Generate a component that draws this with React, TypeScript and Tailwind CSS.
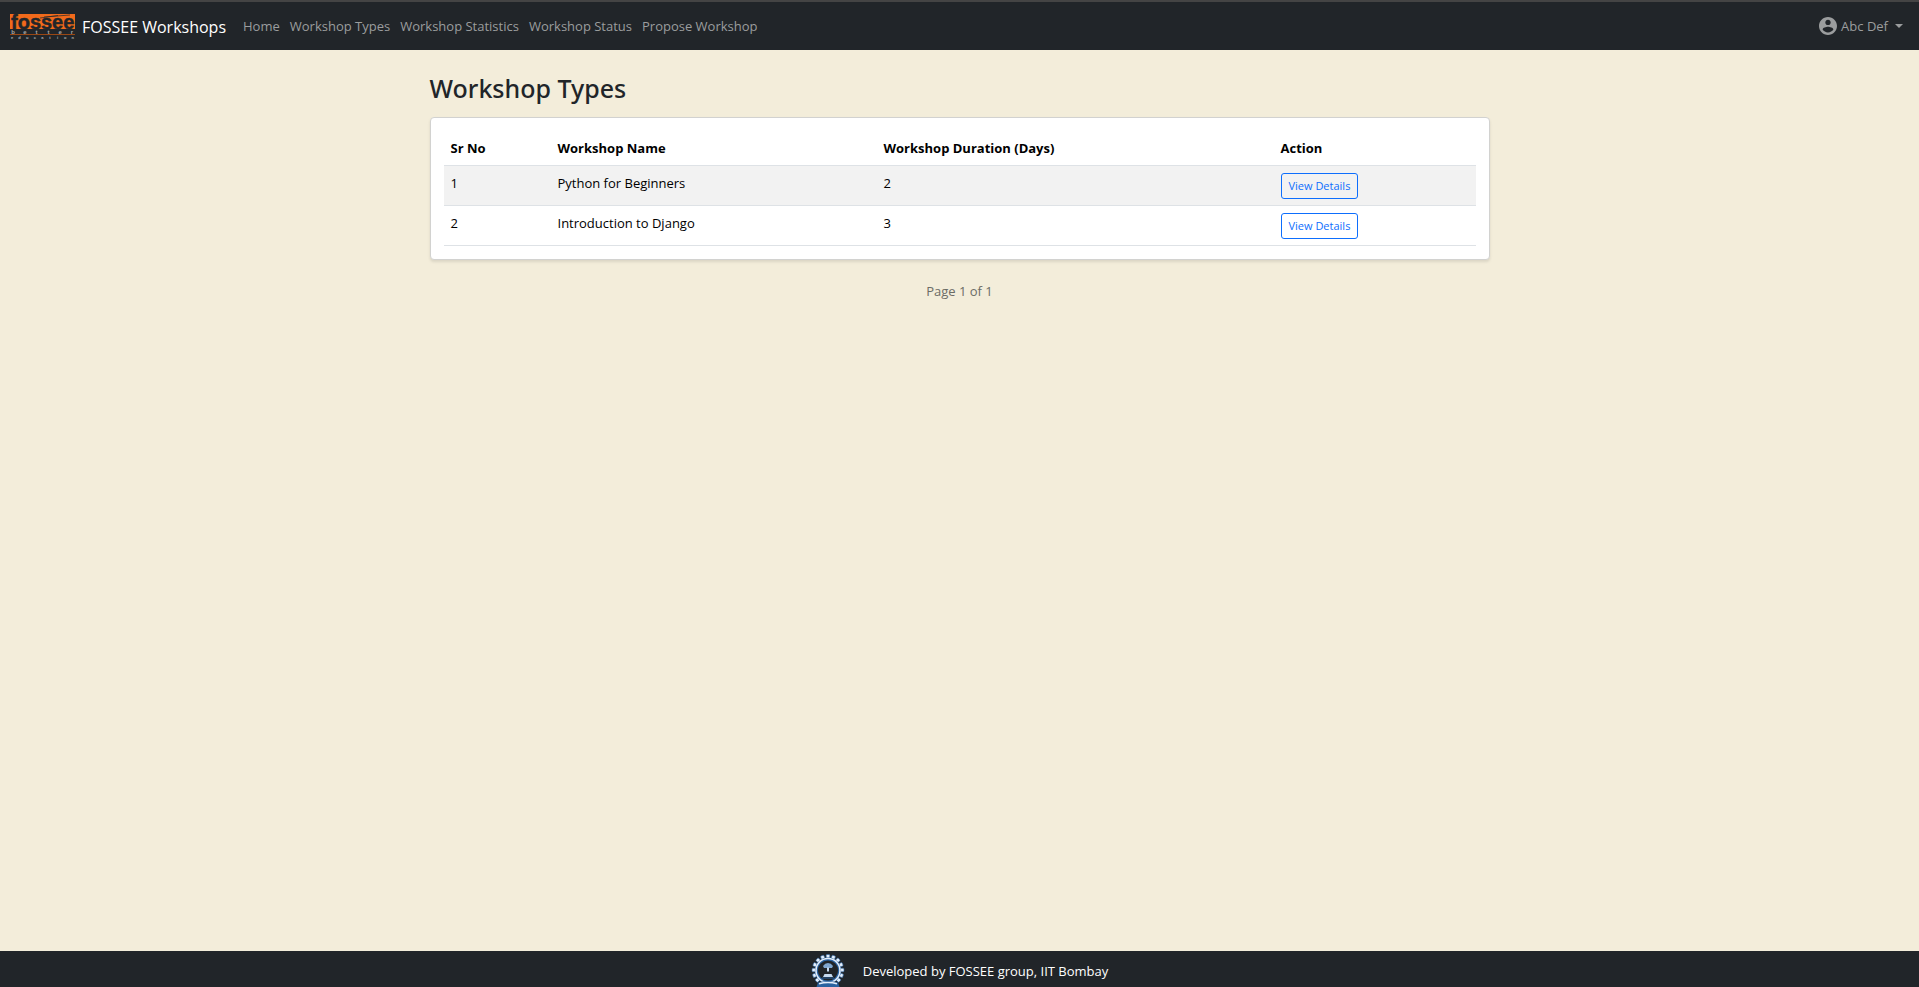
import React from "react";

const navLinks = ["Home", "Workshop Types", "Workshop Statistics", "Workshop Status", "Propose Workshop"];

const workshops = [
  { id: 1, name: "Python for Beginners", days: 2 },
  { id: 2, name: "Introduction to Django", days: 3 },
];

const better = ["b", "e", "t", "t", "e", "r"];
const education = ["e", "d", "u", "c", "a", "t", "i", "o", "n"];

function FosseeLogo() {
  return (
    <svg width="65" height="26" viewBox="0 0 65 26" role="img" aria-label="FOSSEE" className="shrink-0 overflow-visible">
      <rect width="65" height="15" fill="#f26a1b" />
      <text x="1" y="15" fontFamily="Liberation Sans" fontWeight="700" fontSize="20" fill="#212529" stroke="#212529" strokeWidth="0.5">fossee</text>
      <path d="M30 4 L48 1.5 M34 3 L60 1" stroke="#212529" strokeWidth="0.7" />
      <rect y="20.2" width="65" height="0.8" fill="#b8500f" />
      {better.map((c, i) => (
        <text key={i} x={3 + i * 11.8} y="19.6" textAnchor="middle" fontFamily="Liberation Sans" fontWeight="700" fontSize="6" fill="#a8a8a8">{c}</text>
      ))}
      {education.map((c, i) => (
        <text key={i} x={2 + i * 7.6} y="25" textAnchor="middle" fontFamily="Liberation Sans" fontWeight="700" fontSize="4" fill="#b0b0b0">{c}</text>
      ))}
    </svg>
  );
}

function InstituteEmblem() {
  const teeth = Array.from({ length: 13 }, (_, i) => -222 + i * 22);
  return (
    <svg width="34" height="33" viewBox="0 0 34 33" role="img" aria-label="IIT Bombay" className="shrink-0">
      {teeth.map((a) => (
        <rect key={a} x="-1.8" y="-1.8" width="3.6" height="3.6" rx="0.8" fill="#e4eefa" stroke="#2a62a0" strokeWidth="0.6"
          transform={`translate(17 16.5) rotate(${a}) translate(14.2 0)`} />
      ))}
      <circle cx="17" cy="16.5" r="11.6" fill="#212529" stroke="#2a62a0" strokeWidth="3" />
      <circle cx="17" cy="16.5" r="12" fill="none" stroke="#e4eefa" strokeWidth="1.6" />
      <path d="M12 12 q2 -3 5 -3 t5 3 l-1 2 h-8z" fill="#7fa6cf" />
      <path d="M16 13.5 h2 v4 h-2z M13 11 h2 M19 11 h2" fill="#c6daf0" />
      <path d="M12 23 l1.5 -3 h7 l1.5 3z" fill="#c6daf0" />
      <path d="M11 24 h12" stroke="#2a62a0" strokeWidth="1" />
      <path d="M7 28.5 q10 -3 20 0 l1.5 4.5 h-23z" fill="#2a62a0" />
      <path d="M8 29.8 q9 -2.4 18 0" stroke="#e4eefa" strokeWidth="1.5" fill="none" />
    </svg>
  );
}

export default function App() {
  return (
    <div className="flex min-h-screen flex-col bg-[#f3edda] font-['Open_Sans','Noto_Sans',sans-serif] text-[13px] leading-5 text-[#212529]">
      <nav className="flex h-[50px] items-center border-t-2 border-[#444444] bg-[#212529] px-[10px]">
        <a href="#" className="mr-3 flex items-center gap-[7px] pt-[2px] text-base text-white">
          <FosseeLogo />
          <span>FOSSEE Workshops</span>
        </a>
        <ul className="flex flex-1 text-[#9b9d9e]">
          {navLinks.map((label) => (
            <li key={label}>
              <a href="#" className="px-[5px]">{label}</a>
            </li>
          ))}
        </ul>
        <button type="button" className="flex items-center gap-1 px-[6px] text-[#9b9d9e]">
          <svg width="18" height="18" viewBox="2 2 20 20" fill="currentColor" aria-hidden="true">
            <path d="M12 2C6.48 2 2 6.48 2 12s4.48 10 10 10 10-4.48 10-10S17.52 2 12 2zm0 3c1.66 0 3 1.34 3 3s-1.34 3-3 3-3-1.34-3-3 1.34-3 3-3zm0 14.2c-2.5 0-4.71-1.28-6-3.22.03-1.99 4-3.08 6-3.08 1.99 0 5.97 1.09 6 3.08-1.29 1.94-3.5 3.22-6 3.22z" />
          </svg>
          <span>Abc Def</span>
          <span className="ml-[3px] border-x-4 border-t-4 border-x-transparent border-t-current" />
        </button>
      </nav>

      <main className="mx-auto w-full max-w-[1060px] flex-1 pt-[22px]">
        <h2 className="mb-[13px] font-['Noto_Sans',sans-serif] text-[25px] leading-8 font-medium">Workshop Types</h2>
        <div className="rounded border border-[#d2d2d0] bg-white px-[13px] py-[13px] shadow-[0_2px_3px_rgba(0,0,0,0.1)]">
          <table className="w-full table-fixed border-separate border-spacing-0 text-left text-black">
            <colgroup>
              <col className="w-[107px]" />
              <col className="w-[326px]" />
              <col className="w-[397px]" />
              <col />
            </colgroup>
            <thead>
              <tr>
                <th className="border-b border-[#dee2e6] px-[7px] py-[7px] font-bold">Sr No</th>
                <th className="border-b border-[#dee2e6] px-[7px] py-[7px] font-bold">Workshop Name</th>
                <th className="border-b border-[#dee2e6] px-[7px] py-[7px] font-bold">Workshop Duration (Days)</th>
                <th className="border-b border-[#dee2e6] px-[7px] py-[7px] font-bold">Action</th>
              </tr>
            </thead>
            <tbody>
              {workshops.map((w) => (
                <tr key={w.id} className="align-top odd:bg-[#f2f2f2]">
                  <td className="border-b border-[#dee2e6] px-[7px] pt-[7px]">{w.id}</td>
                  <td className="border-b border-[#dee2e6] px-[7px] pt-[7px]">{w.name}</td>
                  <td className="border-b border-[#dee2e6] px-[7px] pt-[7px]">{w.days}</td>
                  <td className="border-b border-[#dee2e6] px-[7px] pt-[7px] pb-[6px]">
                    <a href="#" className="flex h-[26px] w-fit items-center rounded-[3px] border border-[#0d6efd] px-[7px] text-[11px] text-[#0d6efd]">View Details</a>
                  </td>
                </tr>
              ))}
            </tbody>
          </table>
        </div>
        <p className="mt-[21px] text-center leading-5 text-[#6c6c66]">Page 1 of 1</p>
      </main>

      <footer className="flex h-9 items-end justify-center gap-[18px] bg-[#212529] text-white">
        <InstituteEmblem />
        <span className="pb-[6px]">Developed by FOSSEE group, IIT Bombay</span>
      </footer>
    </div>
  );
}
